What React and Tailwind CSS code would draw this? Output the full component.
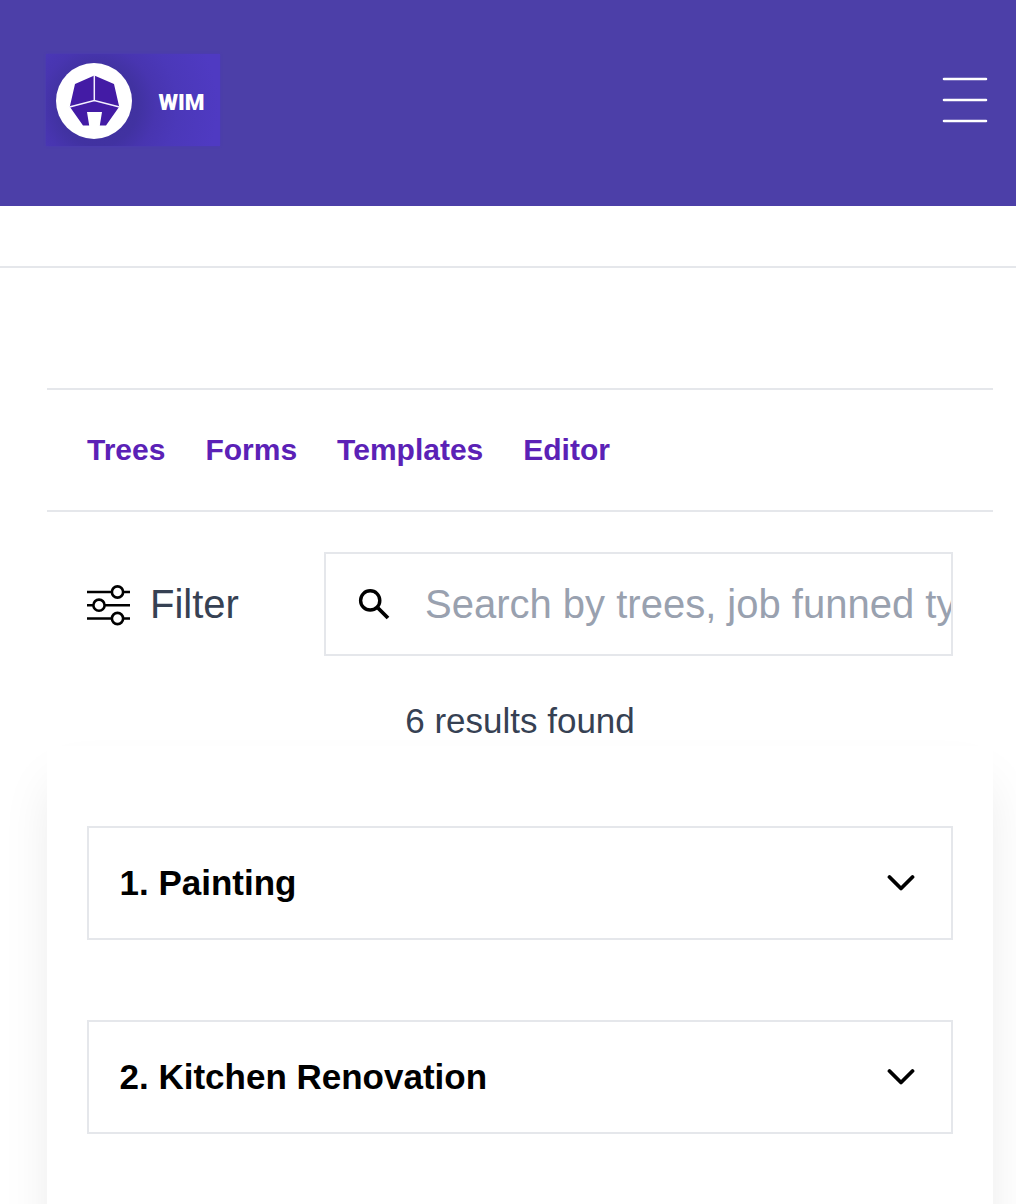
const NAV = ["Trees", "Forms", "Templates", "Editor"];
const ITEMS = ["1. Painting", "2. Kitchen Renovation"];

function Logo() {
  return (
    <div className="flex h-[92px] w-[174px] items-center bg-[radial-gradient(circle_at_52px_52px,#3f319b_0,#4132a1_40px,#4835b0_58px,#4b38b9_80px,#4f3ac2_120px)] pt-[2px] pl-[10.5px] shadow-[0_0_2px_#4c39b8]">
      <svg width="76" height="76" viewBox="0 0 76 76">
        <circle cx="38" cy="38" r="38" fill="#fff" />
        <path
          d="M38.3 12.5L58 21L63.2 43.8L50 62.5H43.8L46 49H31L33.2 62.5H27L13.8 43.8L19 21Z"
          fill="#431ba5"
        />
        <path d="M38.3 12V37.5M13.5 44L38.3 37.5L63.5 44" stroke="#f4efff" strokeWidth="1.5" fill="none" />
      </svg>
      <span className="mt-0.5 ml-[26.5px] font-['Roboto'] text-[22.5px] leading-none font-black text-white">
        WIM
      </span>
    </div>
  );
}

function FilterIcon() {
  return (
    <svg className="mt-[3px]" width="43" height="42" viewBox="0 0 43 42" fill="none" stroke="#000" strokeWidth="2.6">
      <path d="M0 7H25M36 7H43M0 20.2H6M18 20.2H43M0 33.5H25M36 33.5H43" />
      <circle cx="30.5" cy="7" r="5.6" />
      <circle cx="12" cy="20.2" r="5.6" />
      <circle cx="30.5" cy="33.5" r="5.6" />
    </svg>
  );
}

function SearchIcon() {
  return (
    <svg width="32" height="32" viewBox="0 0 32 32" fill="none" stroke="#000">
      <circle cx="12.2" cy="12.4" r="9.6" strokeWidth="3.4" />
      <path d="M20 20L30 30" strokeWidth="3.8" />
    </svg>
  );
}

export default function App() {
  return (
    <div className="h-[1204px] w-full overflow-hidden bg-white font-['Liberation_Sans',Arial,sans-serif]">
      <header className="flex h-[206px] items-center justify-between bg-[#4c3fa8] pr-7 pb-1.5 pl-[45.5px]">
        <Logo />
        <button aria-label="Menu">
          <svg width="46" height="46" viewBox="0 0 46 46" stroke="#fff" strokeWidth="2.6" strokeLinecap="round">
            <path d="M2 2H44M2 23H44M2 44H44" />
          </svg>
        </button>
      </header>
      <div className="h-[62px] border-b-2 border-gray-200" />

      <main className="mt-[120px] mr-[23px] ml-[47px]">
        <nav className="flex h-[124px] items-center gap-10 border-y-2 border-gray-200 px-10 pb-0.5 text-[30px] font-bold text-[#5b21b6]">
          {NAV.map((n) => (
            <a key={n} href="#">
              {n}
            </a>
          ))}
        </nav>

        <div className="mt-10 flex items-center px-10">
          <button className="flex w-[237px] items-center gap-5 text-[40px] text-gray-700">
            <FilterIcon />
            Filter
          </button>
          <div className="flex h-[104px] flex-1 items-center overflow-hidden border-2 border-gray-200 pl-8">
            <SearchIcon />
            <input
              className="ml-[35px] w-0 min-w-0 flex-1 text-[40px] outline-none placeholder:text-gray-400"
              placeholder="Search by trees, job funned type"
            />
          </div>
        </div>

        <p className="mt-10 text-center text-[35px] leading-[50px] text-gray-700">6 results found</p>

        <section className="flex h-[600px] flex-col gap-20 bg-white px-10 pt-20 shadow-[0_32px_50px_-8px_rgba(0,0,0,0.1)]">
          {ITEMS.map((t) => (
            <button
              key={t}
              className="flex h-[114px] items-center justify-between border-2 border-gray-200 pr-9 pl-[30.5px] text-[35px] font-bold text-black"
            >
              {t}
              <svg
                width="28"
                height="18"
                viewBox="0 0 28 18"
                fill="none"
                stroke="#000"
                strokeWidth="3.8"
                strokeLinecap="round"
                strokeLinejoin="round"
              >
                <path d="M2.5 3L14 14.5L25.5 3" />
              </svg>
            </button>
          ))}
        </section>
      </main>
    </div>
  );
}
